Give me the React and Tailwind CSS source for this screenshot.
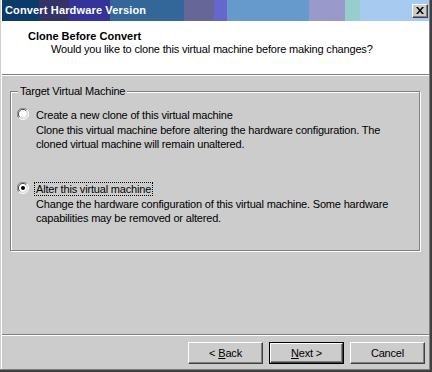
import { useState } from "react";

const font = "font-['Liberation_Sans',Arial,sans-serif]";

const Raised = ({ className = "", children }) => (
  <div
    className={`border border-t-white border-l-white border-r-[#404040] border-b-[#404040] shadow-[inset_-1px_-1px_0_#808080] bg-[#cccccc] ${className}`}
  >
    {children}
  </div>
);

const Radio = ({ checked }) => (
  <svg width="12" height="12" viewBox="0 0 12 12" className="shrink-0">
    <circle cx="6" cy="6" r="5" fill="#ffffff" />
    <path d="M1.8 9.9 A5.5 5.5 0 0 1 9.9 1.8" fill="none" stroke="#808080" strokeWidth="1" />
    <path d="M2.7 9.0 A4.4 4.4 0 0 1 9.0 2.7" fill="none" stroke="#404040" strokeWidth="1" />
    <path d="M9.9 1.8 A5.5 5.5 0 0 1 1.8 9.9" fill="none" stroke="#ffffff" strokeWidth="1" />
    <path d="M9.0 2.7 A4.4 4.4 0 0 1 2.7 9.0" fill="none" stroke="#cccccc" strokeWidth="1" />
    {checked && <circle cx="6" cy="6" r="2" fill="#000000" />}
  </svg>
);

const Option = ({ checked, label, desc, onClick, className = "" }) => (
  <div className={`flex items-start gap-[7px] ${className}`} onClick={onClick}>
    <div className="mt-[-1px]">
      <Radio checked={checked} />
    </div>
    <div>
      <div className="leading-[13px] h-[13px]">
        <span
          className={`${checked ? "outline outline-1 outline-dotted outline-black" : ""} px-[1px] -ml-[1px]`}
        >
          {label}
        </span>
      </div>
      <div className="mt-[1px] leading-[14px]">{desc}</div>
    </div>
  </div>
);

const Button = ({ children, isDefault }) =>
  isDefault ? (
    <div className="border border-black w-[75px] h-[22px]">
      <Raised className="w-full h-full flex items-center justify-center">{children}</Raised>
    </div>
  ) : (
    <Raised className="w-[75px] h-[22px] flex items-center justify-center">{children}</Raised>
  );

export default function App() {
  const [choice, setChoice] = useState("alter");

  return (
    <div className={`${font} text-[11px] tracking-[-0.18px] text-black w-[432px] h-[372px] border-r-2 border-b-2 border-[#404040] overflow-hidden`}>
      <div className="h-full border-r border-b border-[#808080]">
        <div className="h-full border-l border-[#d4d0c8]">
          <div className="h-full border-l border-white bg-[#cccccc] flex flex-col">
            {/* Title bar */}
            <div className="h-[21px] shrink-0 flex items-center justify-between pl-[3px] pr-[1px] bg-[linear-gradient(to_right,#0b3b6b_0_37px,#333366_37px_67px,#333399_67px_108px,#336699_108px_182px,#666699_182px_212px,#6666cc_212px_225px,#6699cc_225px_307px,#9999cc_307px_343px,#99cccc_343px_358px,#a6caf0_358px)]">
              <span className="text-white font-bold text-[11px] tracking-[0.15px] leading-none">Convert Hardware Version</span>
              <Raised className="w-[16px] h-[14px] flex items-center justify-center">
                <svg width="8" height="7" viewBox="0 0 8 7">
                  <path d="M0 0h2l2 2.5L6 0h2L5 3.5 8 7H6L4 4.5 2 7H0l3-3.5z" fill="#000" />
                </svg>
              </Raised>
            </div>

            {/* Header */}
            <div className="h-[53px] shrink-0 bg-white pt-[9px]">
              <div className="pl-[26px] font-bold tracking-normal leading-[13px]">Clone Before Convert</div>
              <div className="pl-[49px] leading-[13px]">
                Would you like to clone this virtual machine before making changes?
              </div>
            </div>
            <div className="shrink-0 border-t border-[#808080] border-b border-b-white" />

            {/* Body */}
            <div className="flex-1 pt-[15px] pl-[8px]">
              <div className="relative w-[410px] h-[160px] border border-[#808080] shadow-[1px_1px_0_#ffffff,inset_1px_1px_0_#ffffff] pt-[17px] pl-[6px]">
                <span className="absolute left-[7px] top-[-8px] px-[2px] bg-[#cccccc] leading-[14px]">
                  Target Virtual Machine
                </span>
                <Option
                  checked={choice === "clone"}
                  onClick={() => setChoice("clone")}
                  label="Create a new clone of this virtual machine"
                  desc={
                    <>
                      Clone this virtual machine before altering the hardware configuration. The
                      <br />
                      cloned virtual machine will remain unaltered.
                    </>
                  }
                />
                <Option
                  className="mt-[32px]"
                  checked={choice === "alter"}
                  onClick={() => setChoice("alter")}
                  label="Alter this virtual machine"
                  desc={
                    <>
                      Change the hardware configuration of this virtual machine. Some hardware
                      <br />
                      capabilities may be removed or altered.
                    </>
                  }
                />
              </div>
            </div>

            <div className="shrink-0 border-t border-[#808080] border-b border-b-white" />

            {/* Buttons */}
            <div className="h-[33px] shrink-0 flex justify-end gap-[6px] pt-[6px] pr-[4px]">
              <Button>
                &lt; <span className="underline ml-[3px]">B</span>ack
              </Button>
              <Button isDefault>
                <span className="underline">N</span>ext &gt;
              </Button>
              <Button>Cancel</Button>
            </div>
          </div>
        </div>
      </div>
    </div>
  );
}
